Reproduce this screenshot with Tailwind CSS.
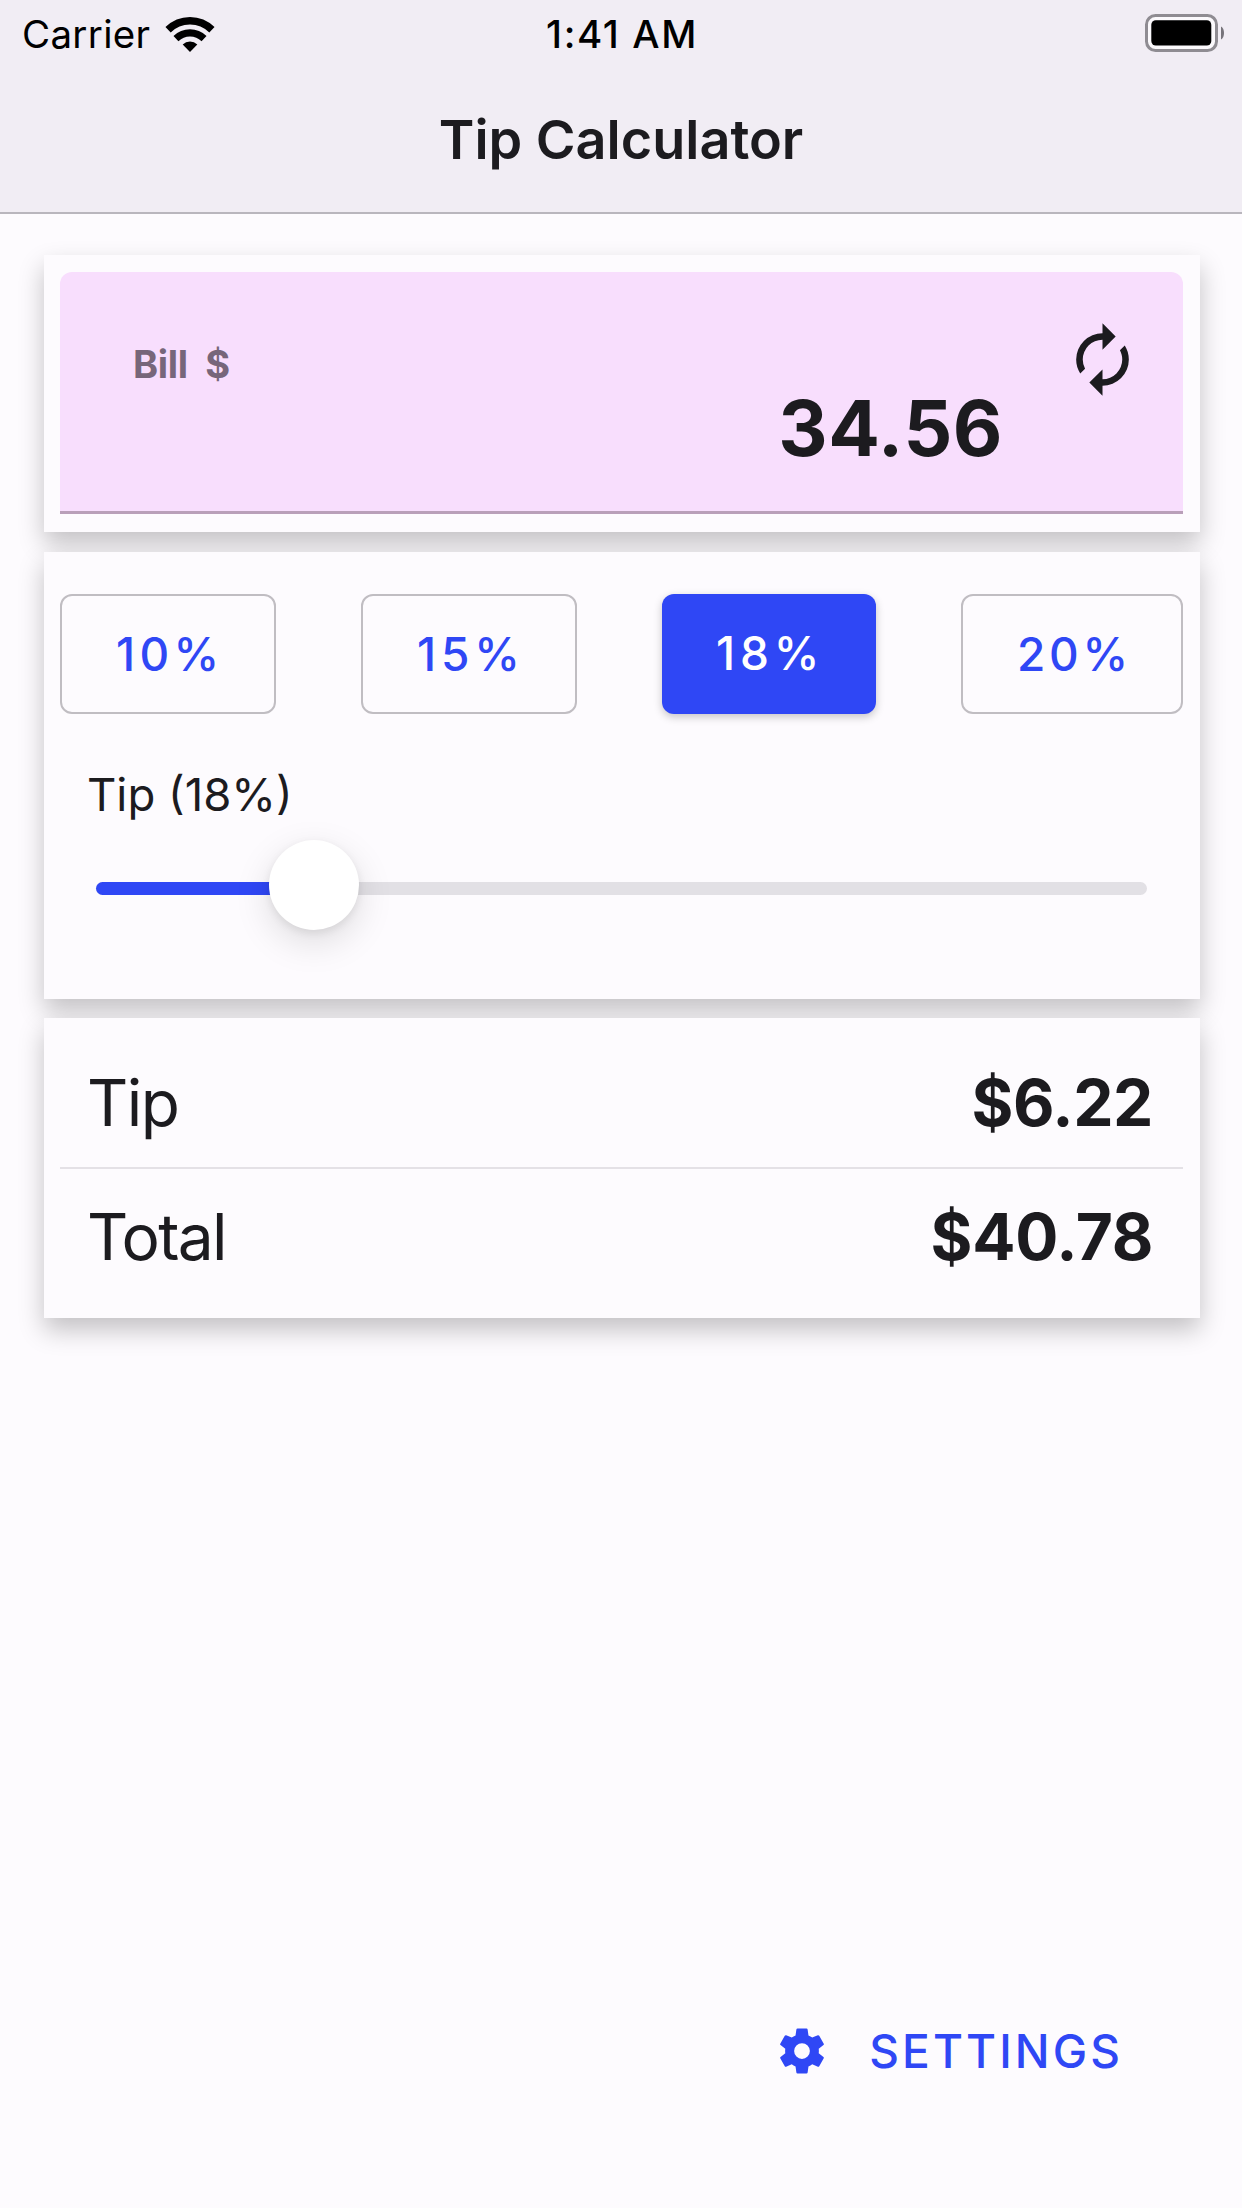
<!DOCTYPE html>
<html lang="en">
<head>
<meta charset="utf-8">
<title>Tip Calculator</title>
<script src="https://cdn.jsdelivr.net/npm/@tailwindcss/browser@4"></script>
</head>
<body class="flex h-[2208px] w-[1242px] flex-col overflow-hidden bg-[#fdfbfe] font-['Inter',sans-serif] text-[#1c1b1f]">
  <header class="h-[214px] shrink-0 border-b-2 border-[#b9b6bd] bg-[#f1edf4]">
    <div class="grid h-[69px] grid-cols-3 items-center text-[38.5px] whitespace-nowrap text-black">
      <div class="flex h-full items-center pl-[22px]">
        <span class="tracking-[0.3px]">Carrier</span>
        <svg class="mb-px ml-[15px] h-[37px] w-[50px]" viewBox="0 0 52 38" preserveAspectRatio="none" fill="none" stroke="#000">
          <path d="M3.2 14.2a32.6 32.6 0 0 1 45.6 0" stroke-width="7.8"/>
          <path d="M11.4 23.2a21 21 0 0 1 29.2 0" stroke-width="7.4"/>
          <path d="M26 37 18.4 29.3a10.8 10.8 0 0 1 15.2 0Z" fill="#000" stroke="none"/>
        </svg>
      </div>
      <div class="pl-[2px] text-center font-medium tracking-[1.6px]">1:41 AM</div>
      <div class="flex justify-end pr-[17px]">
        <svg class="mb-[3px] h-[38px] w-[80px]" viewBox="0 0 80 38">
          <rect x="1.5" y="1.5" width="70" height="35" rx="9" fill="#fbf9fc" stroke="#8f8c92" stroke-width="3"/>
          <rect x="6.3" y="6.2" width="60" height="25.3" rx="4.5" fill="#000"/>
          <path d="M76 12.5c4 2 4 11 0 13Z" fill="#77747a"/>
        </svg>
      </div>
    </div>
    <h1 class="pt-[37px] text-center text-[54px] leading-[68px] font-semibold">Tip Calculator</h1>
  </header>

  <main class="flex flex-col gap-[19.5px] pt-[41px] pr-[42.5px] pl-[43.5px]">
    <!-- Bill amount -->
    <section class="h-[277px] bg-[#fdfbfe] px-[16.5px] pt-[17px] shadow-[0_12px_24px_rgba(0,0,0,0.23)]">
      <div class="flex h-[242px] items-start rounded-t-xl border-b-[3px] border-[#b99fb9] bg-[#f8defd] pr-[41px] pl-[73px]">
        <label class="mt-[69px] text-[38px] leading-[46px] font-bold tracking-[-0.3px] whitespace-pre text-[#77667a]">Bill  $</label>
        <div class="mt-[110px] mr-[60px] ml-auto text-[76.5px] leading-[92px] font-bold tracking-[0.5px]">34.56</div>
        <svg class="mt-[48px] size-[79px]" viewBox="0 0 24 24" fill="currentColor"><path d="M12 6v3l4-4-4-4v3a8 8 0 0 0-8 8c0 1.57.46 3.03 1.24 4.26L6.7 14.8A5.9 5.9 0 0 1 6 12a6 6 0 0 1 6-6m6.76 1.74L17.3 9.2c.44.84.7 1.8.7 2.8a6 6 0 0 1-6 6v-3l-4 4 4 4v-3a8 8 0 0 0 8-8c0-1.57-.46-3.03-1.24-4.26"/></svg>
      </div>
    </section>

    <!-- Tip percentage -->
    <section class="h-[447px] bg-[#fdfbfe] px-[16.5px] pt-[42.5px] shadow-[0_12px_24px_rgba(0,0,0,0.23)]">
      <div class="flex justify-between text-[46px] leading-[56px] font-medium text-[#2f47f5]">
        <button class="h-[120px] w-[216px] rounded-xl border-2 border-[#c0bdc2] pl-[54px] text-left tracking-[4.3px]">10%</button>
        <button class="h-[120px] w-[216px] rounded-xl border-2 border-[#c0bdc2] pl-[54px] text-left tracking-[4.8px]">15%</button>
        <button class="h-[120px] w-[214px] rounded-xl bg-[#2f47f5] pb-[2px] pl-[54px] text-left tracking-[4.8px] text-white shadow-[0_3px_8px_rgba(0,0,0,0.22)]">18%</button>
        <button class="h-[120px] w-[222px] rounded-xl border-2 border-[#c0bdc2] pl-[54px] text-left tracking-[3.7px]">20%</button>
      </div>
      <div class="mt-[51px] pl-[27px] text-[45.5px] leading-[60px]">Tip (18%)</div>
      <div class="relative mt-[15px] mr-9 ml-9 h-[90px] pt-[42px]">
        <div class="h-[13px] rounded-full bg-[#e2e0e5]">
          <div class="h-full rounded-full bg-[#2f47f5]" style="width:18%"></div>
        </div>
        <div class="absolute top-0 left-[173px] size-[90px] rounded-full bg-white shadow-[0_12px_36px_rgba(0,0,0,0.13),0_3px_8px_rgba(0,0,0,0.08)]"></div>
      </div>
    </section>

    <!-- Results -->
    <section class="h-[299.5px] bg-[#fdfbfe] px-[16.5px] text-[64px] leading-[80px] shadow-[0_12px_24px_rgba(0,0,0,0.23)]">
      <div class="flex h-[150.5px] justify-between border-b-2 border-[#e4e1e6] pt-[44.5px] pr-[30px] pl-[27px]">
        <span class="tracking-[-1.5px]">Tip</span>
        <span class="font-bold tracking-[-0.4px]">$6.22</span>
      </div>
      <div class="flex justify-between pt-[28px] pr-[30px] pl-[27px]">
        <span class="tracking-[-1.7px]">Total</span>
        <span class="font-bold tracking-[-0.3px]">$40.78</span>
      </div>
    </section>
  </main>

  <footer class="mt-auto flex justify-end pr-[119px] pb-[127px] text-[#2f47f5]">
    <button class="flex h-[60px] items-center gap-[40px] text-[46px] leading-[60px] font-medium tracking-[3.1px]">
      <svg class="size-[54px]" viewBox="0 0 24 24" fill="currentColor"><path d="M12 15.5A3.5 3.5 0 0 1 8.5 12 3.5 3.5 0 0 1 12 8.5a3.5 3.5 0 0 1 3.5 3.5 3.5 3.5 0 0 1-3.5 3.5m7.43-2.53c.04-.32.07-.64.07-.97s-.03-.66-.07-1l2.11-1.63c.19-.15.24-.42.12-.64l-2-3.46c-.12-.22-.39-.31-.61-.22l-2.49 1c-.52-.39-1.06-.73-1.69-.98l-.37-2.65A.506.506 0 0 0 14 2h-4c-.25 0-.46.18-.5.42l-.37 2.65c-.63.25-1.17.59-1.69.98l-2.49-1c-.22-.09-.49 0-.61.22l-2 3.46c-.13.22-.07.49.12.64L4.57 11c-.04.34-.07.67-.07 1s.03.65.07.97l-2.11 1.66c-.19.15-.25.42-.12.64l2 3.46c.12.22.39.3.61.22l2.49-1.01c.52.4 1.06.74 1.69.99l.37 2.65c.04.24.25.42.5.42h4c.25 0 .46-.18.5-.42l.37-2.65c.63-.26 1.17-.59 1.69-.99l2.49 1.01c.22.08.49 0 .61-.22l2-3.46c.12-.22.07-.49-.12-.64z"/></svg>
      <span>SETTINGS</span>
    </button>
  </footer>
</body>
</html>
